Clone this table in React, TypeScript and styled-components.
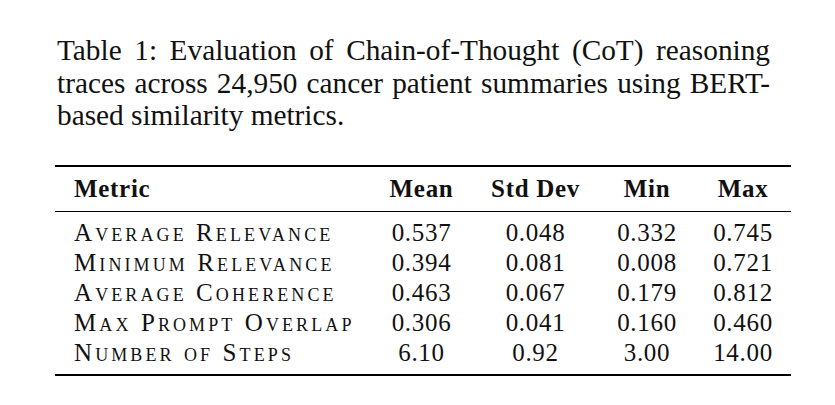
import { createGlobalStyle } from "styled-components";
import styled from "styled-components";

const GlobalStyle = createGlobalStyle`
  html, body {
    margin: 0;
    padding: 0;
    background: #ffffff;
  }
  body {
    font-family: "Liberation Serif", "Times New Roman", serif;
    color: #111111;
  }
`;

const Page = styled.main`
  padding: 34px 0 0 55px;
  width: 736px;
`;

const Caption = styled.p`
  margin: 0 0 33px 2px;
  width: 713px;
  font-size: 29.3px;
  line-height: 32.5px;
  text-align: justify;
`;

const COLUMNS = "316px 101px 127px 96px 96px";

const StyledTable = styled.div`
  width: 736px;
  border-top: 2px solid #000;
  border-bottom: 2px solid #000;
  letter-spacing: 0.7px;
`;

const Row = styled.div`
  display: grid;
  grid-template-columns: ${COLUMNS};
  line-height: 30px;
`;

const HeaderRow = styled(Row)`
  padding: 7px 0 7px;
  border-bottom: 1px solid #000;
  font-weight: 700;
  font-size: 25px;
`;

const Body = styled.div`
  padding: 6px 0 6px;
  font-size: 25px;
`;

const Cell = styled.div<{ $first?: boolean }>`
  padding: ${(p) => (p.$first ? "0 0 0 19px" : "0")};
  text-align: ${(p) => (p.$first ? "left" : "center")};
  white-space: nowrap;
`;

const MetricName = styled(Cell)`
  font-variant: small-caps;
  letter-spacing: 3.1px;
`;

interface Metric {
  name: string;
  mean: string;
  std: string;
  min: string;
  max: string;
}

const metrics: Metric[] = [
  { name: "Average Relevance", mean: "0.537", std: "0.048", min: "0.332", max: "0.745" },
  { name: "Minimum Relevance", mean: "0.394", std: "0.081", min: "0.008", max: "0.721" },
  { name: "Average Coherence", mean: "0.463", std: "0.067", min: "0.179", max: "0.812" },
  { name: "Max Prompt Overlap", mean: "0.306", std: "0.041", min: "0.160", max: "0.460" },
  { name: "Number of Steps", mean: "6.10", std: "0.92", min: "3.00", max: "14.00" },
];

export default function App() {
  return (
    <>
      <GlobalStyle />
      <Page>
        <Caption>
          Table 1: Evaluation of Chain-of-Thought (CoT) reasoning traces across
          24,950 cancer patient summaries using BERT-based similarity metrics.
        </Caption>
        <StyledTable role="table">
          <HeaderRow role="row">
            <Cell $first>Metric</Cell>
            <Cell>Mean</Cell>
            <Cell>Std Dev</Cell>
            <Cell>Min</Cell>
            <Cell>Max</Cell>
          </HeaderRow>
          <Body>
            {metrics.map((m) => (
              <Row role="row" key={m.name}>
                <MetricName $first>{m.name}</MetricName>
                <Cell>{m.mean}</Cell>
                <Cell>{m.std}</Cell>
                <Cell>{m.min}</Cell>
                <Cell>{m.max}</Cell>
              </Row>
            ))}
          </Body>
        </StyledTable>
      </Page>
    </>
  );
}
